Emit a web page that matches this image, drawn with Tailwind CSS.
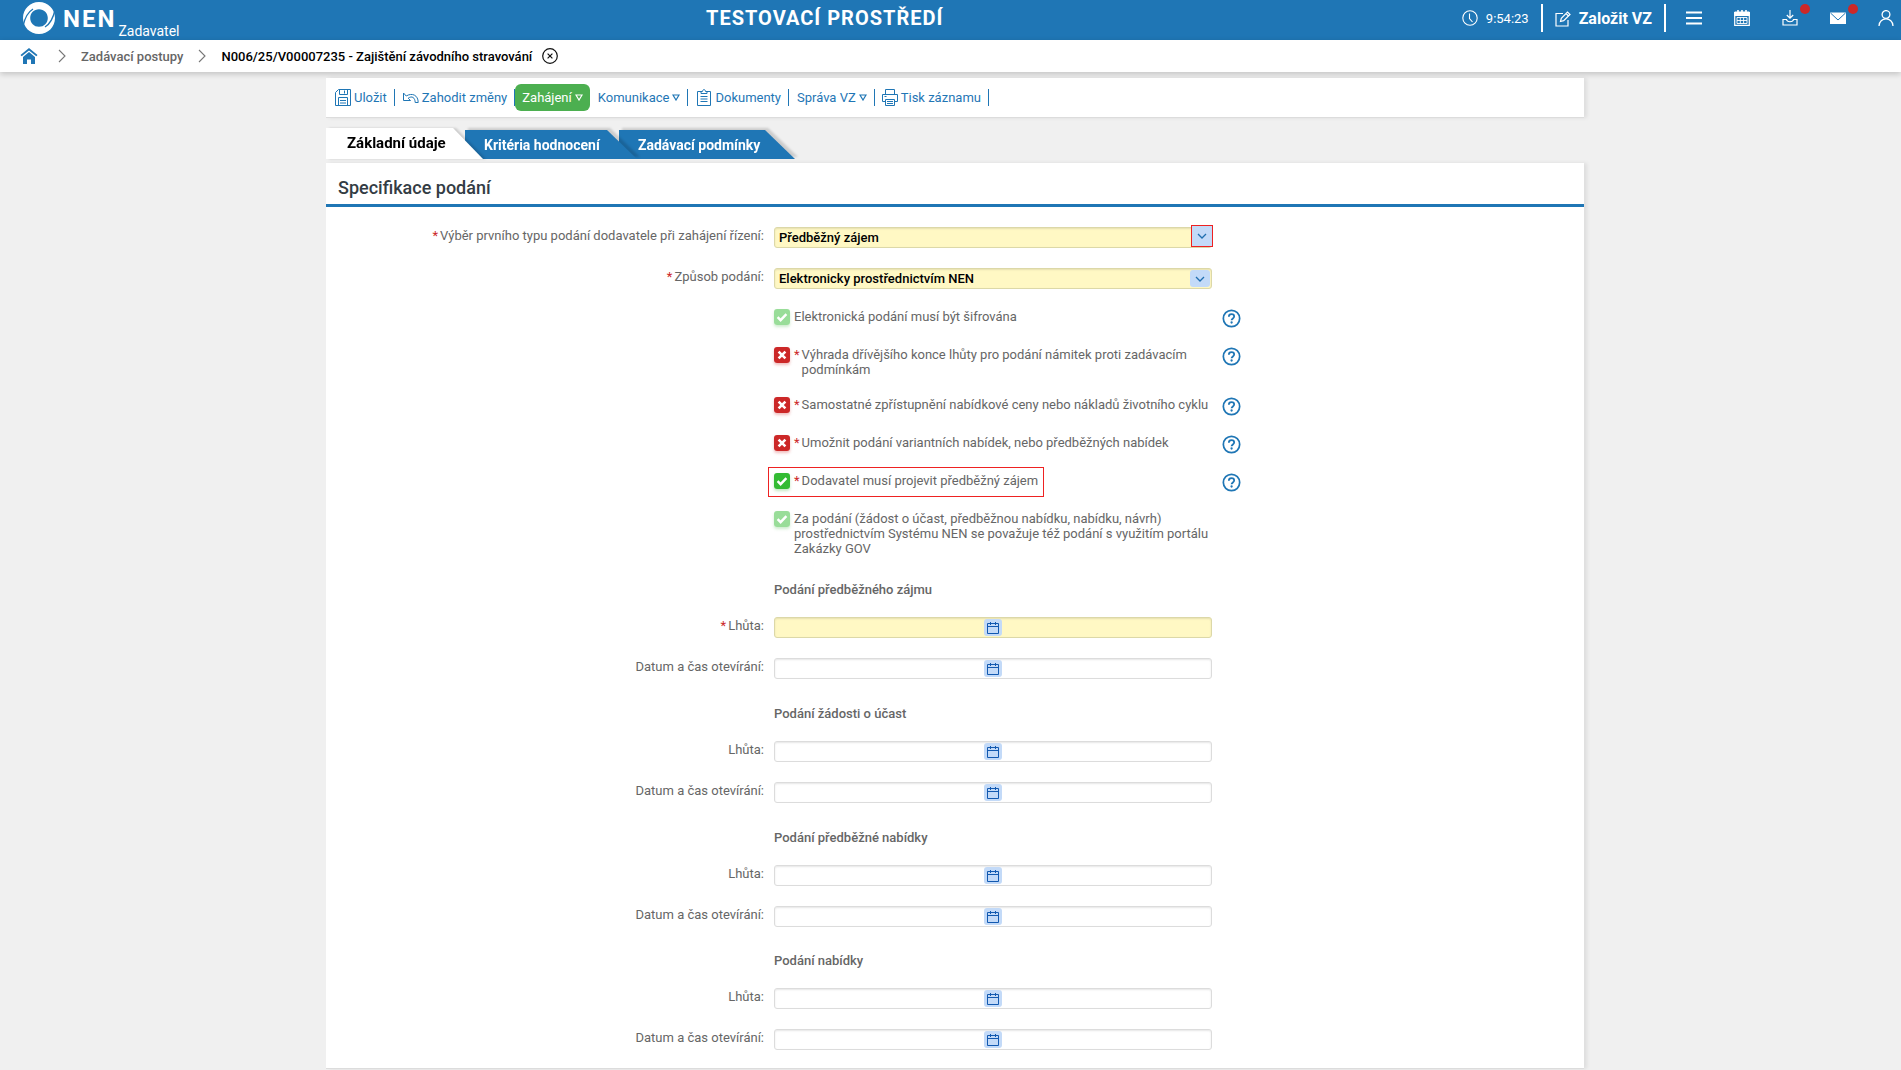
<!DOCTYPE html>
<html lang="cs">
<head>
    <meta charset="UTF-8">
    <meta name="viewport" content="width=device-width, initial-scale=1.0">
    <title>NEN - Zajištění závodního stravování</title>
    <script src="https://cdn.jsdelivr.net/npm/@tailwindcss/browser@4"></script>
</head>
<body class="min-h-screen bg-[#f0f0f0] font-['Roboto',sans-serif] text-[13px] leading-[15px] text-[#666]">

    <!-- Shared icons -->
    <svg class="hidden">
        <symbol id="calendar" viewBox="0 0 14 14">
            <path d="M1.500 2.500h11v10h-11zM1.500 5.500h11M4.500 1v3M9.500 1v3" fill="none" stroke="#1259b0" stroke-width="1"/>
        </symbol>
        <symbol id="help" viewBox="0 0 20 20">
            <circle cx="10" cy="10" r="8.6" fill="none" stroke="#1f76b5" stroke-width="1.8"/>
            <path d="M7.2 8.1C7.2 6.4 8.4 5.4 10 5.4s2.8 1 2.8 2.5c0 2-2.7 2-2.7 4" fill="none" stroke="#1f76b5" stroke-width="1.9"/>
            <circle cx="10.1" cy="14.2" r="1.2" fill="#1f76b5"/>
        </symbol>
        <symbol id="check" viewBox="0 0 16 16">
            <path d="M3.6 8.2l3 3 5.800-6" fill="none" stroke="#fff" stroke-width="2.4"/>
        </symbol>
        <symbol id="cross" viewBox="0 0 16 16">
            <path d="M4.600 4.600l6.800 6.800M11.400 4.600l-6.800 6.800" fill="none" stroke="#fff" stroke-width="2.6"/>
        </symbol>
        <symbol id="chevron" viewBox="0 0 8 14">
            <path d="M1 1l6 6-6 6" fill="none" stroke="#777" stroke-width="1.1"/>
        </symbol>
        <symbol id="down" viewBox="0 0 10 6">
            <path d="M1 1l4 4 4-4" fill="none" stroke="#1f6fb0" stroke-width="1.3"/>
        </symbol>
        <symbol id="triangle" viewBox="0 0 8 7">
            <path d="M1 1h6L4 6z" fill="none" stroke="currentColor" stroke-width="1.2"/>
        </symbol>
    </svg>

    <!-- Top bar -->
    <header class="flex h-10 items-start justify-between bg-[#1f76b5] pr-[7px] pl-[22px] text-white">
        <a href="#" class="flex">
            <svg class="mt-0.5 h-8 w-[34px]" viewBox="0 0 34 32">
                <path fill="#fff" fill-rule="evenodd" d="M17 0C26 0 33 7 33 16C33 25 26 32 17 32C8 32 1 25 1 16C1 7 8 0 17 0ZM17 7.200C12 7.200 8.200 11 8.200 16C8.200 21 12 24.800 17 24.800C22 24.800 25.800 21 25.800 16C25.800 11 22 7.200 17 7.200Z"/>
                <path d="M1 24C3 15 6 10 11 7M33 8C31 17 28 22 23 25" fill="none" stroke="#1f76b5" stroke-width="1.300"/>
            </svg>
            <span class="ml-[7px] pt-[7px] text-2xl leading-6 font-bold tracking-[2px]">NEN</span>
            <span class="ml-0.5 pt-[23px] text-sm leading-4">Zadavatel</span>
        </a>
        <div class="pt-2 pl-2 text-xl leading-5 font-bold tracking-[1px]">TESTOVACÍ PROSTŘEDÍ</div>
        <nav class="flex h-9 items-center">
            <svg class="size-4" viewBox="0 0 16 16" fill="none" stroke="#fff" stroke-width="1.100"><circle cx="8" cy="8" r="7.200"/><path d="M7.500 3.500v5l3 3.500"/></svg>
            <span class="ml-2">9:54:23</span>
            <span class="ml-3 h-7 w-0.5 bg-white"></span>
            <a href="#" class="ml-3 flex items-center pt-0.5 text-base leading-5 font-bold">
                <svg class="mr-2 size-4" viewBox="0 0 16 16" fill="none" stroke="#fff" stroke-width="1.200"><path d="M8 2.500H1v12.500h12V9M5.500 10.500l.8-3.200L12.500 1l2.500 2.500-6.300 6.200zM11 2.500L13.500 5"/></svg>
                Založit VZ
            </a>
            <span class="ml-3 h-7 w-0.5 bg-white"></span>
            <button type="button" aria-label="Menu" class="ml-5"><svg class="block size-4" viewBox="0 0 16 16"><path d="M0 2.500h16M0 8h16M0 13.500h16" stroke="#fff" stroke-width="1.800"/></svg></button>
            <button type="button" aria-label="Kalendář" class="ml-8"><svg class="block size-4" viewBox="0 0 16 16" fill="none" stroke="#fff"><path d="M.7 2.500h14.600v12.800H.7z" stroke-width="1.200"/><path d="M.7 2h14.600v3.500H.7z" fill="#fff"/><path d="M4 0v3M8 0v3M12 0v3" stroke-width="1.600"/><path d="M3 7.500h10v6H3zM3 10.500h10M6.300 7.500v6M9.600 7.500v6" stroke-width=".9"/></svg></button>
            <button type="button" aria-label="Stažené soubory" class="relative ml-8">
                <svg class="block size-4" viewBox="0 0 16 16" fill="none" stroke="#fff" stroke-width="1.200"><path d="M8 0v8M4.800 5l3.200 3.200L11.200 5M1 9.500h3.500c.5 3 6.500 3 7 0H15v5.500H1z"/></svg>
                <span class="absolute -top-1.5 left-[18px] size-2.5 rounded-full bg-[#cc2828]"></span>
            </button>
            <button type="button" aria-label="Zprávy" class="relative ml-8">
                <svg class="block size-4" viewBox="0 0 16 16"><path d="M0 2.500h16v11.500H0z" fill="#fff"/><path d="M.5 3L8 10l7.500-7" fill="none" stroke="#1f76b5" stroke-width="1"/></svg>
                <span class="absolute -top-1.5 left-[18px] size-2.5 rounded-full bg-[#cc2828]"></span>
            </button>
            <button type="button" aria-label="Uživatel" class="ml-8"><svg class="block size-4" viewBox="0 0 16 16" fill="none" stroke="#fff" stroke-width="1.300"><circle cx="8" cy="4.500" r="3.900"/><path d="M1 16c0-9.500 14-9.500 14 0"/></svg></button>
        </nav>
    </header>

    <!-- Breadcrumb -->
    <nav class="flex h-8 items-center bg-white px-5 font-medium shadow-[0_2px_6px_rgba(0,0,0,0.2)]">
        <a href="#" aria-label="Domů"><svg class="block h-4 w-[18px]" viewBox="0 0 18 16" fill="#1f76b5"><path d="M9 0l8.500 7-1.200 1.300L9 2.500 1.700 8.300.5 7z"/><path d="M9 4l6 5v7h-4v-4.500H7V16H3V9z"/></svg></a>
        <svg class="ml-5 h-3.5 w-2"><use href="#chevron"/></svg>
        <a href="#" class="ml-[15px]">Zadávací postupy</a>
        <svg class="ml-[15px] h-3.5 w-2"><use href="#chevron"/></svg>
        <span class="ml-[15px] text-black">N006/25/V00007235 - Zajištění závodního stravování</span>
        <button type="button" aria-label="Zavřít" class="ml-2.5"><svg class="block size-4" viewBox="0 0 16 16" fill="none" stroke="#111" stroke-width="1.200"><circle cx="8" cy="8" r="7.300"/><path d="M5.600 5.600l4.800 4.800M10.400 5.600l-4.800 4.800"/></svg></button>
    </nav>

    <div class="pt-1.5 pl-[9px]">
        <main class="mx-auto max-w-[1258px]">

            <!-- Toolbar -->
            <div class="flex h-10 items-center border-b border-[#dcdcdc] bg-white pl-[9px] text-[#1f76b5] shadow-[3px_0_4px_rgba(0,0,0,0.08)]">
                <button type="button" class="flex items-center gap-[3px] border-r border-[#1f76b5] pr-[7px]">
                    <svg class="h-[17px] w-4" viewBox="0 0 16 17" fill="none" stroke="currentColor"><path d="M3.500.5h12v16H.5v-13zM4.500.5v5h8v-5M9.500 1.500v3M3.500 16.500v-8h9v8M5 11.500h6M5 14h6"/></svg>
                    Uložit
                </button>
                <button type="button" class="flex items-center gap-[3px] border-r border-[#1f76b5] py-px pr-[7px] pl-2">
                    <svg class="h-[15px] w-4" viewBox="0 0 16 15" fill="none" stroke="currentColor"><path d="M.5 3v7.500h7L5.200 8.200C9 5.500 12 7.500 12.200 12.500h3C15.200 5 9 2.500 3.200 6z"/></svg>
                    Zahodit změny
                </button>
                <button type="button" class="flex h-[27px] items-center gap-[3px] rounded-md bg-[#4caf50] px-[7px] text-white">Zahájení <svg class="h-[7px] w-2"><use href="#triangle"/></svg></button>
                <button type="button" class="flex items-center gap-[3px] border-r border-[#1f76b5] py-px pr-[7px] pl-2">Komunikace <svg class="h-[7px] w-2"><use href="#triangle"/></svg></button>
                <button type="button" class="flex items-center gap-[3px] border-r border-[#1f76b5] pr-[7px] pl-2">
                    <svg class="h-[17px] w-4" viewBox="0 0 16 17" fill="none" stroke="currentColor"><path d="M5 2.500H1.500v14h13v-14H11M5 4.500h6v-2H9.500C9.500 0 6.500 0 6.500 2.500H5zM4.500 7.500h7M4.500 10h7M4.500 12.500h7"/></svg>
                    Dokumenty
                </button>
                <button type="button" class="flex items-center gap-[3px] border-r border-[#1f76b5] py-px pr-[7px] pl-2">Správa VZ <svg class="h-[7px] w-2"><use href="#triangle"/></svg></button>
                <button type="button" class="flex items-center gap-[3px] border-r border-[#1f76b5] pr-[7px] pl-[7px]">
                    <svg class="h-[17px] w-4" viewBox="0 0 16 17" fill="none" stroke="currentColor"><path d="M3.500 5.500v-5h9v5M3.500 12.500h-3v-7h15v7h-3M3.500 10.500h9v6h-9zM5 12.500h6M5 14.500h6M2.500 7.500h2"/></svg>
                    Tisk záznamu
                </button>
            </div>

            <!-- Tabs -->
            <div class="mt-2.5 mb-1 flex h-[31px] items-end text-sm font-bold text-white">
                <div class="relative z-30 h-[31px] drop-shadow-[3px_0_1px_rgba(0,0,0,0.15)]">
                    <a href="#" class="flex h-full w-[157px] items-center bg-white pt-px pl-[21px] text-[15px] text-black [clip-path:polygon(0_0,calc(100%-30px)_0,100%_100%,0_100%)]">Základní údaje</a>
                </div>
                <div class="relative z-20 -ml-[18px] h-[29px] drop-shadow-[3px_-2px_1px_rgba(0,0,0,0.15)]">
                    <a href="#" class="flex h-full w-[172px] items-center bg-[#1f76b5] pt-px pl-[19px] [clip-path:polygon(0_0,calc(100%-30px)_0,100%_100%,0_100%)]">Kritéria hodnocení</a>
                </div>
                <div class="relative z-10 -ml-[18px] h-[29px] drop-shadow-[3px_-2px_1px_rgba(0,0,0,0.15)]">
                    <a href="#" class="flex h-full w-[176px] items-center bg-[#1f76b5] pt-px pl-[19px] [clip-path:polygon(0_0,calc(100%-30px)_0,100%_100%,0_100%)]">Zadávací podmínky</a>
                </div>
            </div>

            <!-- Form -->
            <form class="border-b border-[#dcdcdc] bg-white pb-[18px] shadow-[3px_0_4px_rgba(0,0,0,0.08)]">
                <h1 class="border-b-[3px] border-[#1f76b5] pt-[15px] pb-1.5 pl-3 text-lg leading-5 font-medium text-[#333c44]">Specifikace podání</h1>

                <div class="mt-5 grid grid-cols-[438px_438px_auto] gap-x-2.5 gap-y-5">
                    <label for="typ" class="text-right leading-[18px]"><span class="mr-0.5 text-[#cc2828]">*</span>Výběr prvního typu podání dodavatele při zahájení řízení:</label>
                    <div class="relative">
                        <select id="typ" class="block h-[21px] w-full appearance-none rounded-[3px] border border-[#dcd8a8] bg-[#fff8c4] px-1 font-medium text-black shadow-[inset_0_1px_2px_rgba(0,0,0,0.1)]"><option>Předběžný zájem</option></select>
                        <span class="pointer-events-none absolute -top-0.5 -right-px flex h-[22px] w-[22px] items-center justify-center border border-[#ee2222] bg-[#c3daf8]"><svg class="h-1.5 w-2.5"><use href="#down"/></svg></span>
                    </div>
                    <span></span>

                    <label for="zpusob" class="text-right leading-[18px]"><span class="mr-0.5 text-[#cc2828]">*</span>Způsob podání:</label>
                    <div class="relative">
                        <select id="zpusob" class="block h-[21px] w-full appearance-none rounded-[3px] border border-[#dcd8a8] bg-[#fff8c4] px-1 font-medium text-black shadow-[inset_0_1px_2px_rgba(0,0,0,0.1)]"><option>Elektronicky prostřednictvím NEN</option></select>
                        <span class="pointer-events-none absolute top-0.5 right-0.5 flex h-[17px] w-5 items-center justify-center rounded-[3px] bg-[#c3daf8]"><svg class="h-1.5 w-2.5"><use href="#down"/></svg></span>
                    </div>
                    <span></span>

                    <div class="col-start-2 flex min-h-[18px] gap-1">
                        <span class="grid size-4 shrink-0 rounded-[3px] shadow-[0_2px_3px_rgba(60,180,60,0.25)]">
                            <input id="sifrovana" type="checkbox" checked disabled class="col-start-1 row-start-1 size-4 appearance-none rounded-[3px] bg-[#99dd99]">
                            <svg class="pointer-events-none col-start-1 row-start-1 size-4"><use href="#check"/></svg>
                        </span>
                        <label for="sifrovana">Elektronická podání musí být šifrována</label>
                    </div>
                    <button type="button" aria-label="Nápověda" class="size-[18px]"><svg class="block size-[19px]"><use href="#help"/></svg></button>

                    <div class="col-start-2 flex min-h-[18px] gap-1">
                        <span class="grid size-4 shrink-0 rounded-[3px] shadow-[0_2px_3px_rgba(204,40,40,0.3)]">
                            <input id="vyhrada" type="checkbox" class="col-start-1 row-start-1 size-4 appearance-none rounded-[3px] bg-[#cc2828]">
                            <svg class="pointer-events-none col-start-1 row-start-1 size-4"><use href="#cross"/></svg>
                        </span>
                        <label for="vyhrada" class="flex gap-0.5"><span class="text-[#cc2828]">*</span><span>Výhrada dřívějšího konce lhůty pro podání námitek proti zadávacím podmínkám</span></label>
                    </div>
                    <button type="button" aria-label="Nápověda" class="size-[18px]"><svg class="block size-[19px]"><use href="#help"/></svg></button>

                    <div class="col-start-2 flex min-h-[18px] gap-1">
                        <span class="grid size-4 shrink-0 rounded-[3px] shadow-[0_2px_3px_rgba(204,40,40,0.3)]">
                            <input id="cena" type="checkbox" class="col-start-1 row-start-1 size-4 appearance-none rounded-[3px] bg-[#cc2828]">
                            <svg class="pointer-events-none col-start-1 row-start-1 size-4"><use href="#cross"/></svg>
                        </span>
                        <label for="cena" class="flex gap-0.5"><span class="text-[#cc2828]">*</span><span>Samostatné zpřístupnění nabídkové ceny nebo nákladů životního cyklu</span></label>
                    </div>
                    <button type="button" aria-label="Nápověda" class="size-[18px]"><svg class="block size-[19px]"><use href="#help"/></svg></button>

                    <div class="col-start-2 flex min-h-[18px] gap-1">
                        <span class="grid size-4 shrink-0 rounded-[3px] shadow-[0_2px_3px_rgba(204,40,40,0.3)]">
                            <input id="varianty" type="checkbox" class="col-start-1 row-start-1 size-4 appearance-none rounded-[3px] bg-[#cc2828]">
                            <svg class="pointer-events-none col-start-1 row-start-1 size-4"><use href="#cross"/></svg>
                        </span>
                        <label for="varianty" class="flex gap-0.5"><span class="text-[#cc2828]">*</span><span>Umožnit podání variantních nabídek, nebo předběžných nabídek</span></label>
                    </div>
                    <button type="button" aria-label="Nápověda" class="size-[18px]"><svg class="block size-[19px]"><use href="#help"/></svg></button>

                    <!-- Highlighted option -->
                    <div class="col-start-2 flex min-h-[18px] gap-1 justify-self-start outline outline-offset-5 outline-[#ee2222]">
                        <span class="grid size-4 shrink-0 rounded-[3px] shadow-[0_2px_3px_rgba(60,180,60,0.3)]">
                            <input id="zajem" type="checkbox" checked class="col-start-1 row-start-1 size-4 appearance-none rounded-[3px] bg-[#33bb33]">
                            <svg class="pointer-events-none col-start-1 row-start-1 size-4"><use href="#check"/></svg>
                        </span>
                        <label for="zajem" class="flex gap-0.5"><span class="text-[#cc2828]">*</span><span>Dodavatel musí projevit předběžný zájem</span></label>
                    </div>
                    <button type="button" aria-label="Nápověda" class="size-[18px]"><svg class="block size-[19px]"><use href="#help"/></svg></button>

                    <div class="col-start-2 flex min-h-[18px] gap-1">
                        <span class="grid size-4 shrink-0 rounded-[3px] shadow-[0_2px_3px_rgba(60,180,60,0.25)]">
                            <input id="portal" type="checkbox" checked disabled class="col-start-1 row-start-1 size-4 appearance-none rounded-[3px] bg-[#99dd99]">
                            <svg class="pointer-events-none col-start-1 row-start-1 size-4"><use href="#check"/></svg>
                        </span>
                        <label for="portal">Za podání (žádost o účast, předběžnou nabídku, nabídku, návrh) prostřednictvím Systému NEN se považuje též podání s využitím portálu Zakázky GOV</label>
                    </div>

                    <h2 class="col-start-2 pt-1.5 font-medium">Podání předběžného zájmu</h2>
                    <label for="lhuta1" class="col-start-1 text-right leading-[18px]"><span class="mr-0.5 text-[#cc2828]">*</span>Lhůta:</label>
                    <div class="flex h-[21px] items-center rounded-[3px] border border-[#dcd8a8] bg-[#fff8c4] shadow-[inset_0_1px_2px_rgba(0,0,0,0.1)]">
                        <input id="lhuta1" type="text" class="h-full min-w-0 flex-1 px-1">
                        <button type="button" aria-label="Vybrat datum" class="flex h-[17px] w-[18px] items-center justify-center rounded-[3px] bg-[#c3daf8]"><svg class="size-3.5"><use href="#calendar"/></svg></button>
                        <input type="text" aria-label="Čas" class="h-full min-w-0 flex-1 px-1">
                    </div>
                    <label for="otevirani1" class="col-start-1 text-right leading-[18px]">Datum a čas otevírání:</label>
                    <div class="flex h-[21px] items-center rounded-[3px] border border-[#dcdcdc] bg-white shadow-[inset_0_1px_2px_rgba(0,0,0,0.1)]">
                        <input id="otevirani1" type="text" class="h-full min-w-0 flex-1 px-1">
                        <button type="button" aria-label="Vybrat datum" class="flex h-[17px] w-[18px] items-center justify-center rounded-[3px] bg-[#c3daf8]"><svg class="size-3.5"><use href="#calendar"/></svg></button>
                        <input type="text" aria-label="Čas" class="h-full min-w-0 flex-1 px-1">
                    </div>

                    <h2 class="col-start-2 pt-[7px] font-medium">Podání žádosti o účast</h2>
                    <label for="lhuta2" class="col-start-1 text-right leading-[18px]">Lhůta:</label>
                    <div class="flex h-[21px] items-center rounded-[3px] border border-[#dcdcdc] bg-white shadow-[inset_0_1px_2px_rgba(0,0,0,0.1)]">
                        <input id="lhuta2" type="text" class="h-full min-w-0 flex-1 px-1">
                        <button type="button" aria-label="Vybrat datum" class="flex h-[17px] w-[18px] items-center justify-center rounded-[3px] bg-[#c3daf8]"><svg class="size-3.5"><use href="#calendar"/></svg></button>
                        <input type="text" aria-label="Čas" class="h-full min-w-0 flex-1 px-1">
                    </div>
                    <label for="otevirani2" class="col-start-1 text-right leading-[18px]">Datum a čas otevírání:</label>
                    <div class="flex h-[21px] items-center rounded-[3px] border border-[#dcdcdc] bg-white shadow-[inset_0_1px_2px_rgba(0,0,0,0.1)]">
                        <input id="otevirani2" type="text" class="h-full min-w-0 flex-1 px-1">
                        <button type="button" aria-label="Vybrat datum" class="flex h-[17px] w-[18px] items-center justify-center rounded-[3px] bg-[#c3daf8]"><svg class="size-3.5"><use href="#calendar"/></svg></button>
                        <input type="text" aria-label="Čas" class="h-full min-w-0 flex-1 px-1">
                    </div>

                    <h2 class="col-start-2 pt-[7px] font-medium">Podání předběžné nabídky</h2>
                    <label for="lhuta3" class="col-start-1 text-right leading-[18px]">Lhůta:</label>
                    <div class="flex h-[21px] items-center rounded-[3px] border border-[#dcdcdc] bg-white shadow-[inset_0_1px_2px_rgba(0,0,0,0.1)]">
                        <input id="lhuta3" type="text" class="h-full min-w-0 flex-1 px-1">
                        <button type="button" aria-label="Vybrat datum" class="flex h-[17px] w-[18px] items-center justify-center rounded-[3px] bg-[#c3daf8]"><svg class="size-3.5"><use href="#calendar"/></svg></button>
                        <input type="text" aria-label="Čas" class="h-full min-w-0 flex-1 px-1">
                    </div>
                    <label for="otevirani3" class="col-start-1 text-right leading-[18px]">Datum a čas otevírání:</label>
                    <div class="flex h-[21px] items-center rounded-[3px] border border-[#dcdcdc] bg-white shadow-[inset_0_1px_2px_rgba(0,0,0,0.1)]">
                        <input id="otevirani3" type="text" class="h-full min-w-0 flex-1 px-1">
                        <button type="button" aria-label="Vybrat datum" class="flex h-[17px] w-[18px] items-center justify-center rounded-[3px] bg-[#c3daf8]"><svg class="size-3.5"><use href="#calendar"/></svg></button>
                        <input type="text" aria-label="Čas" class="h-full min-w-0 flex-1 px-1">
                    </div>

                    <h2 class="col-start-2 pt-1.5 font-medium">Podání nabídky</h2>
                    <label for="lhuta4" class="col-start-1 text-right leading-[18px]">Lhůta:</label>
                    <div class="flex h-[21px] items-center rounded-[3px] border border-[#dcdcdc] bg-white shadow-[inset_0_1px_2px_rgba(0,0,0,0.1)]">
                        <input id="lhuta4" type="text" class="h-full min-w-0 flex-1 px-1">
                        <button type="button" aria-label="Vybrat datum" class="flex h-[17px] w-[18px] items-center justify-center rounded-[3px] bg-[#c3daf8]"><svg class="size-3.5"><use href="#calendar"/></svg></button>
                        <input type="text" aria-label="Čas" class="h-full min-w-0 flex-1 px-1">
                    </div>
                    <label for="otevirani4" class="col-start-1 text-right leading-[18px]">Datum a čas otevírání:</label>
                    <div class="flex h-[21px] items-center rounded-[3px] border border-[#dcdcdc] bg-white shadow-[inset_0_1px_2px_rgba(0,0,0,0.1)]">
                        <input id="otevirani4" type="text" class="h-full min-w-0 flex-1 px-1">
                        <button type="button" aria-label="Vybrat datum" class="flex h-[17px] w-[18px] items-center justify-center rounded-[3px] bg-[#c3daf8]"><svg class="size-3.5"><use href="#calendar"/></svg></button>
                        <input type="text" aria-label="Čas" class="h-full min-w-0 flex-1 px-1">
                    </div>
                </div>
            </form>
        </main>
    </div>

</body>
</html>
